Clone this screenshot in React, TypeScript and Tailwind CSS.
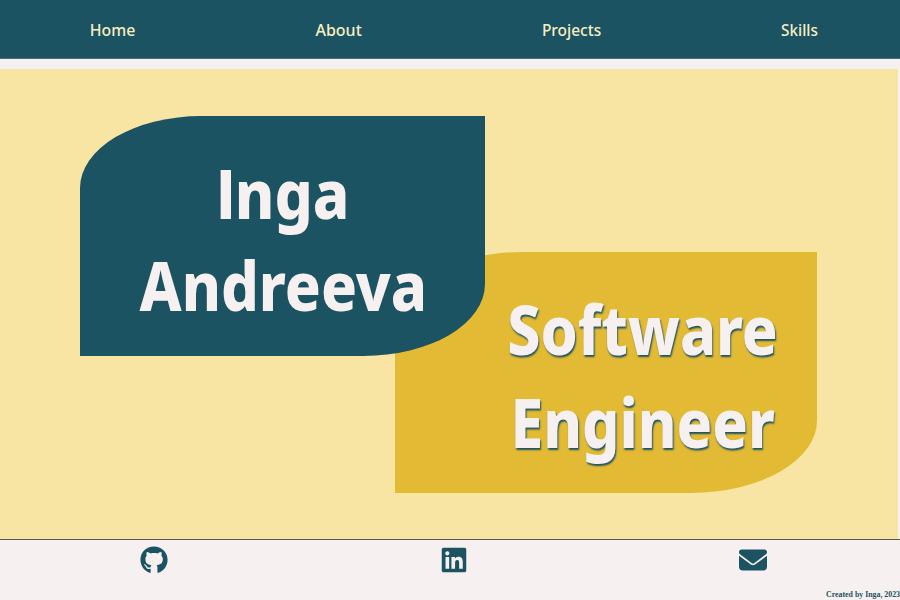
import { FaEnvelope, FaGithub, FaLinkedin } from "react-icons/fa6";

const links = [
  { label: "Home", width: "w-[45px]", fit: "scale-x-[0.93]" },
  { label: "About", width: "w-[47px]", fit: "scale-x-[0.94]" },
  { label: "Projects", width: "w-[59px]", fit: "scale-x-[0.91]" },
  { label: "Skills", width: "w-[37px]", fit: "scale-x-[0.9]" },
];

export default function App() {
  return (
    <div className="flex h-[600px] w-[900px] flex-col overflow-hidden bg-[#f6f0f0] font-['Noto_Sans','Open_Sans',sans-serif]">
      <nav className="flex h-[59px] shrink-0 items-center gap-[180px] border-b border-[#3f6f7c] bg-[#1c5362] pt-px pl-[90px] text-[17px] font-medium text-[#f8eec0]">
        {links.map((l) => (
          <a key={l.label} href="#" className={`flex justify-center whitespace-nowrap ${l.width}`}>
            <span className={`inline-block ${l.fit}`}>{l.label}</span>
          </a>
        ))}
      </nav>
      <main className="mt-[10px] mr-[2px] h-[470px] shrink-0 bg-[#f8e5a3] pt-[47px] text-[68px] leading-[92.5px] font-extrabold text-[#f6f0f0]">
        <h1 className="relative z-10 ml-[80px] flex h-[240px] w-[405px] flex-col items-center rounded-tl-[30%] rounded-br-[30%] bg-[#1c5362] pt-[31px] pl-px">
          <span className="inline-block h-[92px] scale-x-[0.885]">
            <span className="font-['Roboto'] leading-none font-black">I</span>nga
          </span>
          <span className="inline-block scale-x-[0.875]">Andreeva</span>
        </h1>
        <h2 className="-mt-[104px] ml-[395px] flex h-[241px] w-[422px] flex-col items-center rounded-tl-[30%] rounded-br-[30%] bg-[#e3ba34] pt-[31px] pl-[73px] [text-shadow:1px_2px_2px_#1c5362]">
          <span className="inline-block scale-x-[0.87]">Software</span>
          <span className="inline-block scale-x-[0.865]">Engineer</span>
        </h2>
      </main>
      <footer className="flex grow flex-col justify-between border-t border-[#4d5d50] text-[#1c5362]">
        <div className="flex justify-between pt-[6px] pr-[133px] pl-[140px] text-[28px]">
          <FaGithub />
          <FaLinkedin />
          <FaEnvelope />
        </div>
        <p className="origin-right scale-x-[0.98] text-right font-['Liberation_Serif',serif] text-[8px] leading-[11px] font-bold">Created by Inga, 2023</p>
      </footer>
    </div>
  );
}
